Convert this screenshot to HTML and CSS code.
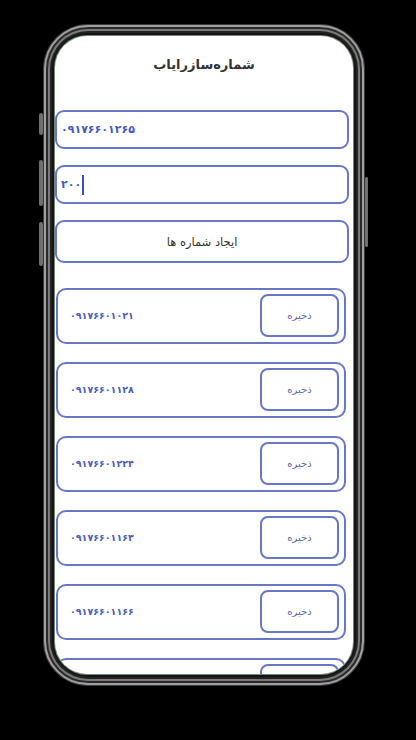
FILE: index.html
```html
<!DOCTYPE html>
<html lang="fa">
<head>
<meta charset="utf-8">
<title>شماره‌سازرایاب</title>
<link rel="stylesheet" href="styles.css">
</head>
<body>
<div class="phone">
  <span class="side-btn left b1"></span>
  <span class="side-btn left b2"></span>
  <span class="side-btn left b3"></span>
  <span class="side-btn right b4"></span>
  <div class="screen" dir="rtl">
    <h1 class="title">شماره‌سازرایاب</h1>
    <div class="form">
      <div class="field"><span class="num" dir="ltr">۰۹۱۷۶۶۰۱۲۶۵</span></div>
      <div class="field"><span class="num" dir="ltr">۲۰۰<span class="caret"></span></span></div>
      <div class="generate">ایجاد شماره ها</div>
    </div>
    <div class="list">
      <div class="card"><div class="save">ذخیره</div><span class="card-num" dir="ltr">۰۹۱۷۶۶۰۱۰۲۱</span></div>
      <div class="card"><div class="save">ذخیره</div><span class="card-num" dir="ltr">۰۹۱۷۶۶۰۱۱۲۸</span></div>
      <div class="card"><div class="save">ذخیره</div><span class="card-num" dir="ltr">۰۹۱۷۶۶۰۱۲۲۴</span></div>
      <div class="card"><div class="save">ذخیره</div><span class="card-num" dir="ltr">۰۹۱۷۶۶۰۱۱۶۳</span></div>
      <div class="card"><div class="save">ذخیره</div><span class="card-num" dir="ltr">۰۹۱۷۶۶۰۱۱۶۶</span></div>
      <div class="card"><div class="save"></div><span class="card-num" dir="ltr"></span></div>
    </div>
  </div>
</div>
</body>
</html>
```

FILE: styles.css
```css
* { box-sizing: border-box; }
html, body {
  margin: 0;
  padding: 0;
  background: #000;
  width: 416px;
  height: 740px;
  overflow: hidden;
  font-family: "DejaVu Sans", "Noto Sans", sans-serif;
}
.phone {
  position: relative;
  margin: 25px 0 0 44px;
  width: 320px;
  height: 660px;
  border: 2px solid #a0a0a0;
  border-radius: 44px;
  background: #151515;
  padding: 9px;
  box-shadow: inset 0 0 0 2px #2a2a2a, inset 0 0 0 4px #7a7a7a, inset 0 0 0 6px #222, 0 0 0 1px #3a3a3a;
}
.side-btn {
  position: absolute;
  width: 4px;
  background: #6f6f6f;
  border-radius: 2px;
}
.side-btn.left { left: -7px; }
.side-btn.right { right: -6px; width: 3px; }
.b1 { top: 86px; height: 22px; }
.b2 { top: 133px; height: 46px; }
.b3 { top: 195px; height: 44px; }
.b4 { top: 150px; height: 70px; }
.screen {
  width: 298px;
  height: 638px;
  background: #fff;
  border-radius: 32px;
  overflow: hidden;
  box-shadow: 0 0 0 1px #6f8a70;
}
.title {
  margin: 0;
  padding-top: 19px;
  height: 74px;
  line-height: 20px;
  text-align: center;
  font-size: 13px;
  font-weight: bold;
  color: #333;
}
.form {
  display: flex;
  flex-direction: column;
  gap: 16px;
  padding-right: 4px;
}
.field {
  height: 39px;
  border: 2px solid #6877c6;
  border-radius: 9px;
  display: flex;
  align-items: center;
  justify-content: flex-end;
  padding: 0 4px;
}
.num {
  font-size: 11px;
  font-weight: bold;
  color: #4457c2;
  display: inline-flex;
  align-items: center;
}
.caret {
  display: inline-block;
  width: 2px;
  height: 20px;
  background: #3a4fc4;
  margin-left: 1px;
}
.generate {
  height: 43px;
  border: 2px solid #6877c6;
  border-radius: 9px;
  display: flex;
  align-items: center;
  justify-content: center;
  font-size: 11.5px;
  color: #333;
}
.list {
  display: flex;
  flex-direction: column;
  gap: 18px;
  margin-top: 25px;
  padding: 0 7px 0 1px;
}
.card {
  flex: none;
  height: 56px;
  border: 2px solid #6877c6;
  border-radius: 10px;
  display: flex;
  align-items: center;
  justify-content: space-between;
  padding: 4px 5px 5px 12px;
}
.save {
  width: 79px;
  height: 43px;
  border: 2px solid #6877c6;
  border-radius: 8px;
  display: flex;
  align-items: center;
  justify-content: center;
  font-size: 10px;
  color: #5a67ad;
}
.card-num {
  font-size: 9.5px;
  font-weight: bold;
  color: #4a5cc0;
}
```
